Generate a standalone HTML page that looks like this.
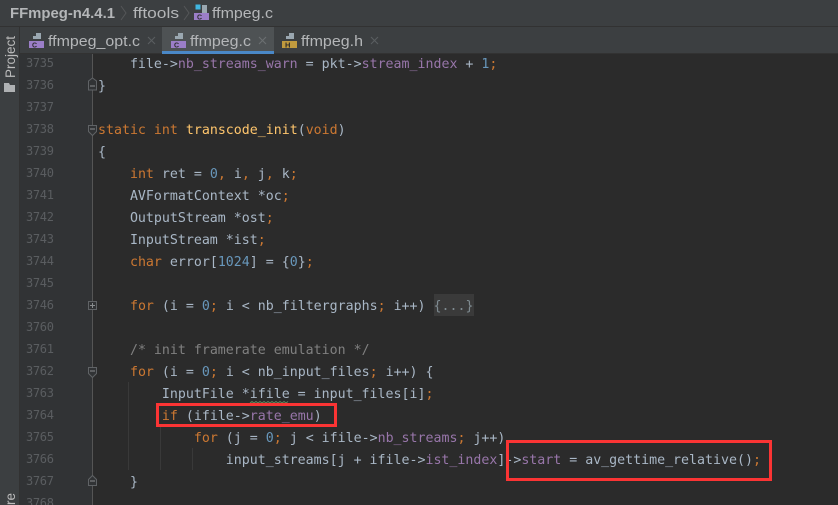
<!DOCTYPE html>
<html><head><meta charset="utf-8">
<style>
html,body{margin:0;padding:0;background:#2b2b2b}
#r{position:relative;width:838px;height:505px;overflow:hidden;background:#2b2b2b}
.a{position:absolute}
.l{position:absolute;left:98px;height:22px;line-height:22px;margin-top:2px;white-space:pre;font-family:"DejaVu Sans Mono","Liberation Mono",monospace;font-size:13.28px;color:#a9b7c6}
.n{position:absolute;left:26px;height:22px;line-height:22px;font-family:"DejaVu Sans Mono","Liberation Mono",monospace;font-size:12px;letter-spacing:-.32px;color:#5a5d60}
.k{color:#cc7832}.f{color:#9876aa}.d{color:#6897bb}.y{color:#ffc66d}.c{color:#808080}
svg{position:absolute;left:0;top:0}
</style></head><body>
<div id="r">
<div class="a" style="left:0;top:0;width:838px;height:53px;background:#3c3f41"></div>
<div class="a" style="left:0;top:26px;width:838px;height:1px;background:#323232"></div>
<div class="a" style="left:0;top:27px;width:20px;height:478px;background:#3c3f41"></div>
<div class="a" style="left:19px;top:27px;width:1px;height:478px;background:#323232"></div>
<div class="a" style="left:20px;top:54px;width:72px;height:451px;background:#313335"></div>
<div class="a" style="left:92px;top:54px;width:1px;height:451px;background:#555555"></div>
<div class="a" style="left:162px;top:27px;width:112px;height:24px;background:#4e5254"></div>
<div class="a" style="left:162px;top:51px;width:112px;height:3px;background:#4a88c7"></div>
<div class="a" style="left:20px;top:53px;width:142px;height:1px;background:#323232"></div>
<div class="a" style="left:274px;top:53px;width:564px;height:1px;background:#323232"></div>
<div class="a" style="left:128px;top:382px;width:1px;height:88px;background:#393939"></div>
<div class="a" style="left:160px;top:426px;width:1px;height:44px;background:#393939"></div>
<div class="a" style="left:192px;top:448px;width:1px;height:22px;background:#393939"></div>
<div class="a" style="left:434px;top:294px;width:40px;height:22px;background:#3a3a3a"></div>

<div class="n" style="top:52px">3735</div><div class="n" style="top:74px">3736</div><div class="n" style="top:96px">3737</div><div class="n" style="top:118px">3738</div><div class="n" style="top:140px">3739</div><div class="n" style="top:162px">3740</div><div class="n" style="top:184px">3741</div><div class="n" style="top:206px">3742</div><div class="n" style="top:228px">3743</div><div class="n" style="top:250px">3744</div><div class="n" style="top:272px">3745</div><div class="n" style="top:294px">3746</div><div class="n" style="top:316px">3760</div><div class="n" style="top:338px">3761</div><div class="n" style="top:360px">3762</div><div class="n" style="top:382px">3763</div><div class="n" style="top:404px">3764</div><div class="n" style="top:426px">3765</div><div class="n" style="top:448px">3766</div><div class="n" style="top:470px">3767</div><div class="n" style="top:492px">3768</div>

<div class="l" style="top:52px">    file-&gt;<span class="f">nb_streams_warn</span> = pkt-&gt;<span class="f">stream_index</span> + <span class="d">1</span><span class="k">;</span></div>
<div class="l" style="top:74px">}</div>
<div class="l" style="top:118px"><span class="k">static int</span> <span class="y">transcode_init</span>(<span class="k">void</span>)</div>
<div class="l" style="top:140px">{</div>
<div class="l" style="top:162px">    <span class="k">int</span> ret = <span class="d">0</span><span class="k">,</span> i<span class="k">,</span> j<span class="k">,</span> k<span class="k">;</span></div>
<div class="l" style="top:184px">    AVFormatContext *oc<span class="k">;</span></div>
<div class="l" style="top:206px">    OutputStream *ost<span class="k">;</span></div>
<div class="l" style="top:228px">    InputStream *ist<span class="k">;</span></div>
<div class="l" style="top:250px">    <span class="k">char</span> error[<span class="d">1024</span>] = {<span class="d">0</span>}<span class="k">;</span></div>
<div class="l" style="top:294px">    <span class="k">for</span> (i = <span class="d">0</span><span class="k">;</span> i &lt; nb_filtergraphs<span class="k">;</span> i++) <span style="color:#7f8b91">{...}</span></div>
<div class="l" style="top:338px">    <span class="c">/* init framerate emulation */</span></div>
<div class="l" style="top:360px">    <span class="k">for</span> (i = <span class="d">0</span><span class="k">;</span> i &lt; nb_input_files<span class="k">;</span> i++) {</div>
<div class="l" style="top:382px">        InputFile *ifile = input_files[i]<span class="k">;</span></div>
<div class="l" style="top:404px">        <span class="k">if</span> (ifile-&gt;<span class="f">rate_emu</span>)</div>
<div class="l" style="top:426px">            <span class="k">for</span> (j = <span class="d">0</span><span class="k">;</span> j &lt; ifile-&gt;<span class="f">nb_streams</span><span class="k">;</span> j++)</div>
<div class="l" style="top:448px">                input_streams[j + ifile-&gt;<span class="f">ist_index</span>]-&gt;<span class="f">start</span> = av_gettime_relative()<span class="k">;</span></div>
<div class="l" style="top:470px">    }</div>

<svg width="838" height="505" viewBox="0 0 838 505" font-family="'Liberation Sans',sans-serif">
 <!-- breadcrumb -->
 <text x="10" y="18" font-size="15" font-weight="bold" fill="#b4b6b8" textLength="105" lengthAdjust="spacingAndGlyphs">FFmpeg-n4.4.1</text>
 <path d="M121 6l5 7-5 7" fill="none" stroke="#555759"/>
 <text x="133" y="18" font-size="15" fill="#b4b6b8" textLength="46" lengthAdjust="spacingAndGlyphs">fftools</text>
 <path d="M184 6l5 7-5 7" fill="none" stroke="#555759"/>
 <rect x="195.500" y="4.500" width="5" height="5" fill="#40b6e0"/>
 <path d="M202 5h5v8h-5z" fill="#9aa7b0"/>
 <rect x="194" y="13" width="15" height="7" fill="#9b7ec8"/>
 <text x="197" y="19.500" font-size="7" font-weight="bold" fill="#2b2b2b">C</text>
 <text x="212" y="18" font-size="15" fill="#b4b6b8" textLength="61" lengthAdjust="spacingAndGlyphs">ffmpeg.c</text>

 <!-- tabs -->
 <path d="M36 33h5v5h-5zM33 36h8v3h-8z" fill="#9aa7b0"/><rect x="29" y="41" width="15" height="7" fill="#9b7ec8"/><text x="32" y="47.500" font-size="7" font-weight="bold" fill="#2b2b2b">C</text>
 <text x="48" y="46" font-size="15" fill="#b4b6b8" textLength="92" lengthAdjust="spacingAndGlyphs">ffmpeg_opt.c</text>
 <path d="M148 37l7 7M155 37l-7 7" stroke="#5a5e60" stroke-width="1.100"/>

 <path d="M178 33h5v5h-5zM175 36h8v3h-8z" fill="#9aa7b0"/><rect x="171" y="41" width="15" height="7" fill="#9b7ec8"/><text x="174" y="47.500" font-size="7" font-weight="bold" fill="#2b2b2b">C</text>
 <text x="190" y="46" font-size="15" fill="#b4b6b8" textLength="61" lengthAdjust="spacingAndGlyphs">ffmpeg.c</text>
 <path d="M259 37l7 7M266 37l-7 7" stroke="#6b6f71" stroke-width="1.100"/>

 <path d="M289 33h5v5h-5zM286 36h8v3h-8z" fill="#9aa7b0"/><rect x="282" y="41" width="15" height="7" fill="#c09a3e"/><text x="285" y="47.500" font-size="7.500" font-weight="bold" fill="#2b2b2b">H</text>
 <text x="301" y="46" font-size="15" fill="#b4b6b8" textLength="62" lengthAdjust="spacingAndGlyphs">ffmpeg.h</text>
 <path d="M371 37l7 7M378 37l-7 7" stroke="#5a5e60" stroke-width="1.100"/>

 <!-- sidebar -->
 <text transform="translate(15,78) rotate(-90)" font-size="13.500" fill="#bbbbbb" textLength="42" lengthAdjust="spacingAndGlyphs">Project</text>
 <path d="M4 83h5l1 2h5v7H4z" fill="#afb1b3"/>
 <text transform="translate(15,505) rotate(-90)" font-size="13.500" fill="#bbbbbb">re</text>

 <!-- fold markers -->
 <g fill="#313335" stroke="#606366">
  <path d="M88.500 85v-4l4-3 4 3v9h-8z"/>
  <path d="M88.500 125.500h8v6l-4 4-4-4z"/>
  <rect x="88.500" y="301.500" width="8" height="8"/>
  <path d="M88.500 367.500h8v6l-4 4-4-4z"/>
  <path d="M88.500 485.500v-6l4-4 4 4v6z"/>
 </g>
 <path d="M90 86h5M90 129h5M90 305.500h5M92.500 303v5M90 371h5M90 481h5" stroke="#8a8d8f"/>

 <!-- squiggle -->
 <path d="M250 403l2-1.500 2 1.500 2-1.500 2 1.500 2-1.500 2 1.500 2-1.500 2 1.500 2-1.500 2 1.500 2-1.500 2 1.500 2-1.500 2 1.500 2-1.500 2 1.500 2-1.500 2 1.500 2-1.500" fill="none" stroke="#5f8a5f"/>

 <!-- red boxes -->
 <rect x="157.500" y="404.500" width="178" height="21" fill="none" stroke="#fb3434" stroke-width="3"/>
 <rect x="507.500" y="441.500" width="263" height="38" fill="none" stroke="#fb3434" stroke-width="3"/>
</svg>
</div>
</body></html>
